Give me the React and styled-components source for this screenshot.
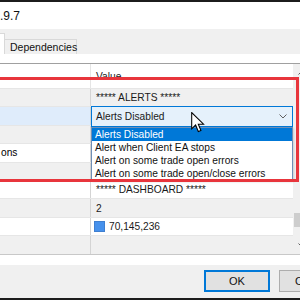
import React from "react";
import styled, { createGlobalStyle } from "styled-components";

const GlobalStyle = createGlobalStyle`
  html, body {
    margin: 0;
    padding: 0;
    background: #f0f0f0;
  }
  body {
    font-family: "Liberation Sans", Arial, sans-serif;
    font-size: 10.2px;
    color: #000;
  }
`;

const Screen = styled.div`
  position: relative;
  width: 300px;
  height: 300px;
  overflow: hidden;
  display: flex;
  flex-direction: column;
  background: #f0f0f0;
`;

const ChartStrip = styled.div`
  height: 2px;
  background: #1c1c1c;
  flex: none;
`;

const TitleBar = styled.div`
  height: 26px;
  flex: none;
  background: #fff;
  display: flex;
  align-items: center;
  font-size: 12px;
  color: #111;
  padding-top: 1px;
`;

const TabStrip = styled.div`
  height: 25px;
  flex: none;
  background: #f0f0f0;
  display: flex;
  align-items: flex-end;
`;

const ActiveTabEdge = styled.div`
  width: 5px;
  height: 21px;
  background: #fff;
  border-right: 1px solid #d9d9d9;
  border-top: 1px solid #d9d9d9;
  box-sizing: border-box;
`;

const Tab = styled.div`
  width: 72px;
  height: 15px;
  box-sizing: border-box;
  border: 1px solid #d9d9d9;
  border-left: none;
  border-bottom: none;
  background: #f0f0f0;
  display: flex;
  align-items: center;
  padding-left: 5px;
  font-size: 10.5px;
  color: #111;
`;

const Panel = styled.div`
  background: #fff;
  padding: 9px 0 10px;
  flex: none;
`;

const ListView = styled.div`
  display: flex;
  border-top: 1px solid #a0a0a0;
  border-bottom: 1px solid #c8c8c8;
  width: 320px;
`;

const Grid = styled.div`
  width: 293px;
  flex: none;
`;

const HeaderRow = styled.div`
  height: 24px;
  display: grid;
  grid-template-columns: 90px 1fr;
  background: #fff;
`;

const HeaderCell = styled.div`
  display: flex;
  align-items: center;
  padding-left: 5px;
  border-left: ${(p) => (p.$first ? "none" : "1px solid #e5e5e5")};
  color: #222;
`;

const Row = styled.div`
  height: 18.4px;
  box-sizing: border-box;
  display: grid;
  grid-template-columns: 90px 1fr;
  border-top: 1px solid #e6e6e6;
  background: ${(p) => (p.$shade ? "#f0f0f0" : "#fff")};
`;

const NameCell = styled.div`
  display: flex;
  align-items: center;
  padding-left: 1px;
  background: ${(p) => (p.$selected ? "#dfecfb" : "transparent")};
  overflow: hidden;
  white-space: nowrap;
`;

const ValueCell = styled.div`
  position: relative;
  display: flex;
  align-items: center;
  gap: 4px;
  padding-left: 5px;
  border-left: 1px solid #d4d4d4;
  white-space: nowrap;
  color: #1a1a1a;
`;

const Swatch = styled.span`
  width: 11px;
  height: 11px;
  box-sizing: border-box;
  background: rgb(70, 145, 236);
  border: 1px solid #3f7fd0;
  margin-left: -2px;
`;

const Combo = styled.div`
  position: absolute;
  left: 0;
  right: 0;
  top: -1px;
  height: 21px;
  box-sizing: border-box;
  border: 1px solid #0078d7;
  background: #e5f1fb;
  display: flex;
  align-items: center;
  justify-content: space-between;
  padding: 0 5px 0 4px;
  z-index: 2;
`;

const DropList = styled.div`
  position: absolute;
  left: 0;
  right: 0;
  top: 20px;
  box-sizing: border-box;
  border: 1px solid #6f8fb6;
  background: #fff;
  box-shadow: 1px 1px 2px rgba(0, 0, 0, 0.15);
  z-index: 3;
`;

const Option = styled.div`
  height: 13px;
  line-height: 13px;
  padding-left: 3px;
  background: ${(p) => (p.$active ? "#0078d7" : "#fff")};
  color: ${(p) => (p.$active ? "#fff" : "#111")};
`;

const ScrollBar = styled.div`
  width: 17px;
  flex: none;
  background: #f0f0f0;
  display: flex;
  flex-direction: column;
  align-items: center;
  position: relative;
`;

const ScrollArrow = styled.div`
  height: 17px;
  display: flex;
  align-items: center;
  justify-content: center;
  margin-top: ${(p) => (p.$down ? "auto" : "0")};
`;

const Thumb = styled.div`
  position: absolute;
  left: 1px;
  top: 149px;
  width: 15px;
  height: 14px;
  background: #cdcdcd;
`;

const Footer = styled.div`
  flex: 1;
  display: flex;
  align-items: flex-start;
  gap: 9px;
  padding: 5px 0 0 204px;
  background: #f0f0f0;
`;

const Button = styled.div`
  width: 66px;
  height: 22px;
  flex: none;
  box-sizing: border-box;
  display: flex;
  align-items: center;
  justify-content: center;
  background: #e1e1e1;
  border: ${(p) => (p.$default ? "2px solid #0078d7" : "1px solid #adadad")};
  font-size: 11px;
  color: #111;
`;

const BottomStrip = styled.div`
  height: 2px;
  flex: none;
  background: #1c1c1c;
`;

const Highlight = styled.div`
  position: absolute;
  left: -4px;
  top: 77px;
  width: 303px;
  height: 105px;
  box-sizing: border-box;
  border: 3px solid #e8353c;
  pointer-events: none;
  z-index: 5;
`;

const Cursor = styled.svg`
  position: absolute;
  left: 191px;
  top: 112px;
  z-index: 6;
`;

const Chevron = ({ up, color = "#606060" }) => (
  <svg width="8" height="5" viewBox="0 0 8 5">
    <path
      d={up ? "M0.5 4.5 L4 1 L7.5 4.5" : "M0.5 0.5 L4 4 L7.5 0.5"}
      fill="none"
      stroke={color}
      strokeWidth="1"
    />
  </svg>
);

const rows = [
  { name: "", value: "***** ALERTS *****" },
  { name: "", value: "", combo: true },
  { name: "", value: "" },
  { name: "ons", value: "" },
  { name: "", value: "" },
  { name: "", value: "***** DASHBOARD *****" },
  { name: "", value: "2" },
  { name: "", value: "70,145,236", color: true },
  { name: "", value: "" },
];

const options = [
  "Alerts Disabled",
  "Alert when Client EA stops",
  "Alert on some trade open errors",
  "Alert on some trade open/close errors",
];

export default function App() {
  return (
    <>
      <GlobalStyle />
      <Screen>
        <ChartStrip />
        <TitleBar>.9.7</TitleBar>
        <TabStrip>
          <ActiveTabEdge />
          <Tab>Dependencies</Tab>
        </TabStrip>
        <Panel>
          <ListView>
            <Grid>
              <HeaderRow>
                <HeaderCell $first />
                <HeaderCell>Value</HeaderCell>
              </HeaderRow>
              {rows.map((r, i) => (
                <Row key={i} $shade={i % 2 === 0}>
                  <NameCell $selected={r.combo}>{r.name}</NameCell>
                  <ValueCell>
                    {r.color && <Swatch />}
                    {r.value}
                    {r.combo && (
                      <>
                        <Combo>
                          <span>Alerts Disabled</span>
                          <Chevron />
                        </Combo>
                        <DropList>
                          {options.map((o, k) => (
                            <Option key={o} $active={k === 0}>
                              {o}
                            </Option>
                          ))}
                        </DropList>
                      </>
                    )}
                  </ValueCell>
                </Row>
              ))}
            </Grid>
            <ScrollBar>
              <ScrollArrow>
                <Chevron up />
              </ScrollArrow>
              <Thumb />
              <ScrollArrow $down>
                <Chevron />
              </ScrollArrow>
            </ScrollBar>
          </ListView>
        </Panel>
        <Footer>
          <Button $default>OK</Button>
          <Button>Cancel</Button>
        </Footer>
        <BottomStrip />
        <Highlight />
        <Cursor width="14" height="21" viewBox="0 0 13 20">
          <path
            d="M0.5 0.5 L0.5 16 L4.2 12.4 L6.8 18.6 L9.3 17.6 L6.8 11.6 L11.8 11.6 Z"
            fill="#fff"
            stroke="#000"
            strokeWidth="1"
            strokeLinejoin="miter"
          />
        </Cursor>
      </Screen>
    </>
  );
}
